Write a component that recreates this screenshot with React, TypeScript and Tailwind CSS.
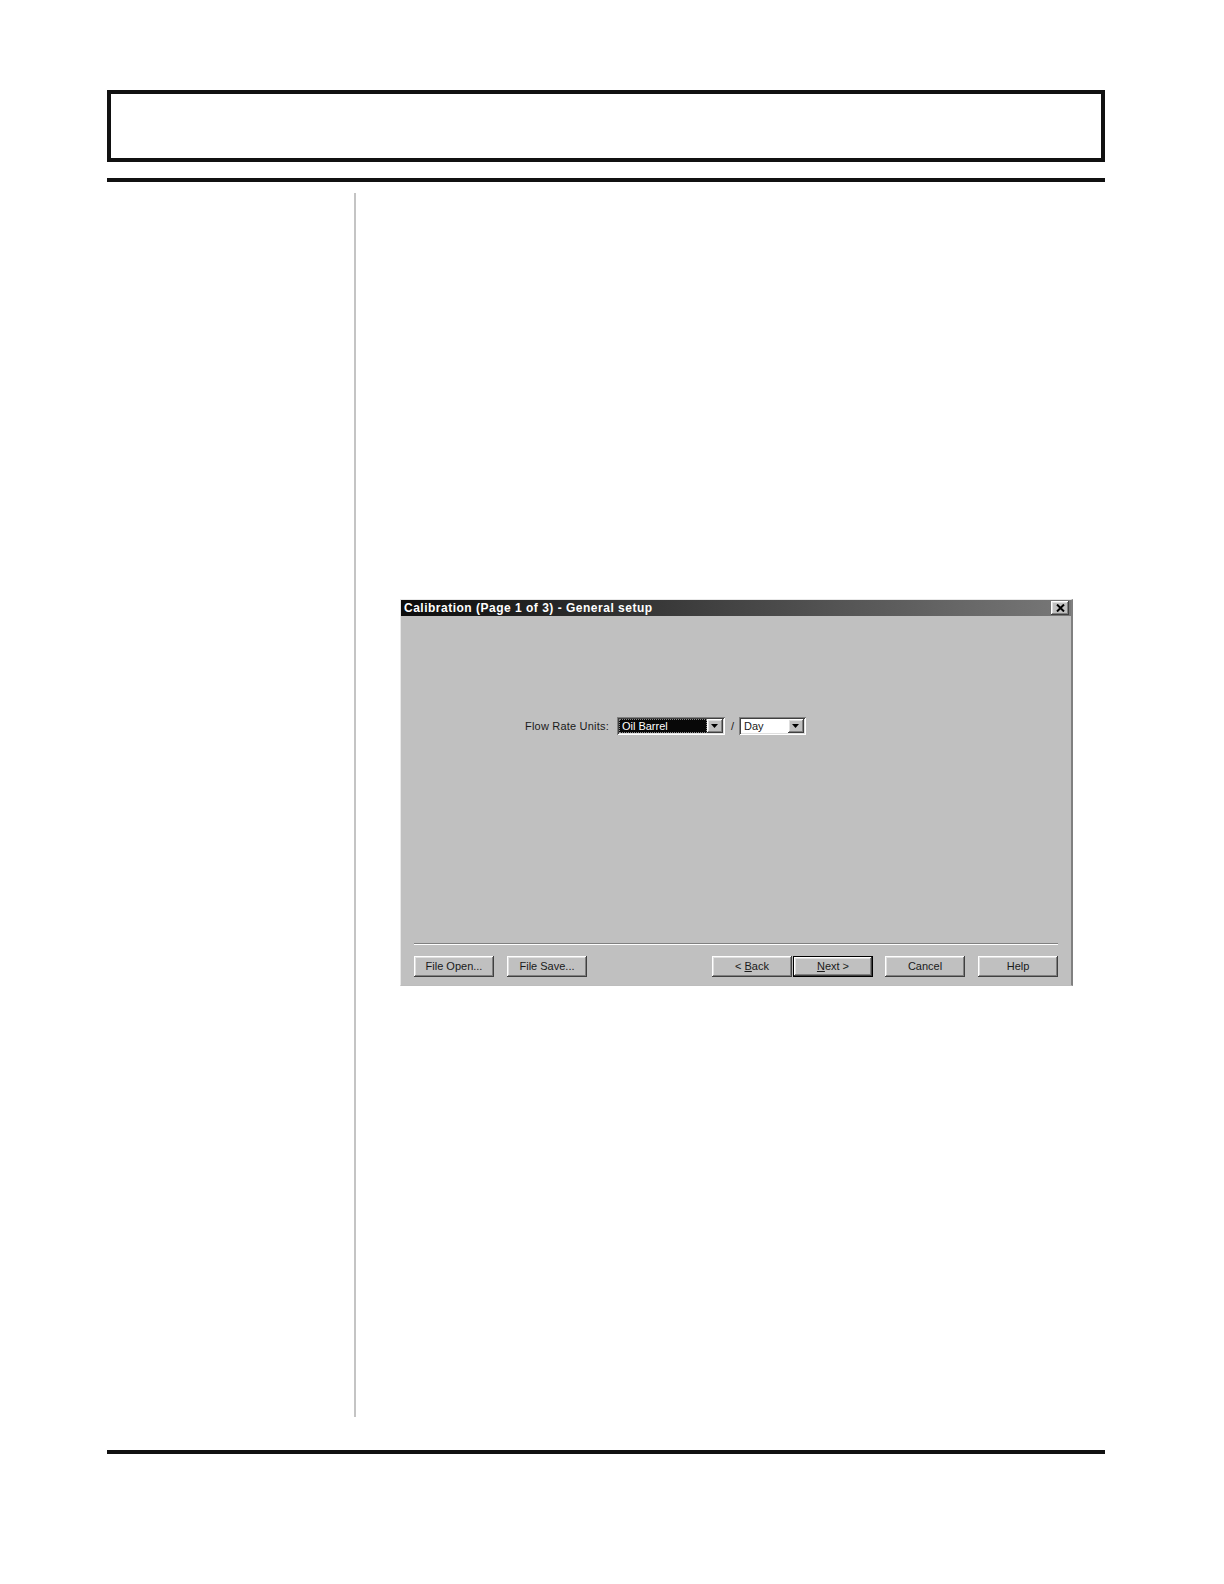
import React from "react";

const raised =
  "shadow-[inset_-1px_-1px_#404040,inset_1px_1px_#ffffff,inset_-2px_-2px_#808080,inset_2px_2px_#dfdfdf]";
const sunken =
  "shadow-[inset_1px_1px_#808080,inset_-1px_-1px_#ffffff,inset_2px_2px_#404040,inset_-2px_-2px_#dfdfdf]";

function Btn({ children, def }: { children: React.ReactNode; def?: boolean }) {
  if (def) {
    return (
      <div className="w-[80px] h-[21px] border border-black bg-[#c0c0c0] flex">
        <div className={`flex-1 flex items-center justify-center text-[11px] text-[#1a1a1a] ${raised}`}>
          {children}
        </div>
      </div>
    );
  }
  return (
    <div
      className={`w-[80px] h-[21px] bg-[#c0c0c0] flex items-center justify-center text-[11px] text-[#1a1a1a] ${raised}`}
    >
      {children}
    </div>
  );
}

function DropBtn() {
  return (
    <div className={`w-[16px] h-[14px] bg-[#c0c0c0] flex items-center justify-center ${raised}`}>
      <svg width="7" height="4" viewBox="0 0 7 4">
        <path d="M0 0h7L3.5 4z" fill="#000" />
      </svg>
    </div>
  );
}

export default function App() {
  return (
    <div
      className="w-[1224px] min-h-[1584px] bg-white"
      style={{ fontFamily: '"Liberation Sans", Arial, sans-serif' }}
    >
      <div className="pl-[107px] pt-[90px] w-[1105px]">
        <div className="w-[998px] h-[72px] border-4 border-[#111]" />
        <div className="mt-[16px] w-[998px] h-[4px] bg-[#111]" />
        <div className="mt-[11px] flex">
          <div className="w-[249px] h-[1224px] border-r-2 border-[#c4c4c4]" />
          <div className="pl-[44px] pt-[406px]">
            {/* Dialog */}
            <div className="w-[673px] h-[387px] bg-[#c0c0c0] border-l border-t border-[#e8e8e8] border-r-2 border-r-[#808080] border-b border-b-[#bdbdbd] flex flex-col">
              <div className="h-[16px] flex items-center justify-between pl-[3px] pr-[2px] bg-[linear-gradient(to_right,#0c0c0c,#3a3a3a_40%,#787878)]">
                <span className="text-[12px] font-bold text-white tracking-[0.5px] leading-none">
                  Calibration (Page 1 of 3) - General setup
                </span>
                <div className={`w-[18px] h-[14px] bg-[#c0c0c0] flex items-center justify-center ${raised}`}>
                  <svg width="9" height="8" viewBox="0 0 9 8">
                    <path d="M1 0.5L8 7.5M8 0.5L1 7.5" stroke="#000" strokeWidth="2" />
                  </svg>
                </div>
              </div>
              <div className="flex-1 flex flex-col">
                <div className="mt-[101px] flex items-center h-[18px]">
                  <span className="ml-[124px] text-[11px] tracking-[0.2px] text-[#1a1a1a]">Flow Rate Units:</span>
                  <div className={`ml-[8px] w-[108px] h-[18px] bg-white flex items-center p-[2px] ${sunken}`}>
                    <div className="flex-1 h-[14px] bg-[#080808] border border-dotted border-[#888] text-white text-[11px] leading-[12px] pl-[2px]">
                      Oil Barrel
                    </div>
                    <DropBtn />
                  </div>
                  <span className="ml-[6px] mr-[5px] text-[11px] text-[#1a1a1a]">/</span>
                  <div className={`w-[67px] h-[18px] bg-white flex items-center p-[2px] ${sunken}`}>
                    <div className="flex-1 text-[11px] leading-[12px] pl-[3px] text-[#1a1a1a]">Day</div>
                    <DropBtn />
                  </div>
                </div>
                <div className="mt-[208px] mx-[13px] h-[2px] border-t border-[#808080] border-b border-b-white" />
                <div className="mt-[11px] mx-[13px] flex">
                  <Btn>File Open...</Btn>
                  <div className="w-[13px]" />
                  <Btn>File Save...</Btn>
                  <div className="flex-1" />
                  <Btn>
                    &lt; <span className="underline ml-[3px]">B</span>ack
                  </Btn>
                  <div className="w-[1px]" />
                  <Btn def>
                    <span className="underline">N</span>ext &gt;
                  </Btn>
                  <div className="w-[12px]" />
                  <Btn>Cancel</Btn>
                  <div className="w-[13px]" />
                  <Btn>Help</Btn>
                </div>
              </div>
            </div>
          </div>
        </div>
        <div className="mt-[33px] w-[998px] h-[4px] bg-[#111]" />
      </div>
    </div>
  );
}
